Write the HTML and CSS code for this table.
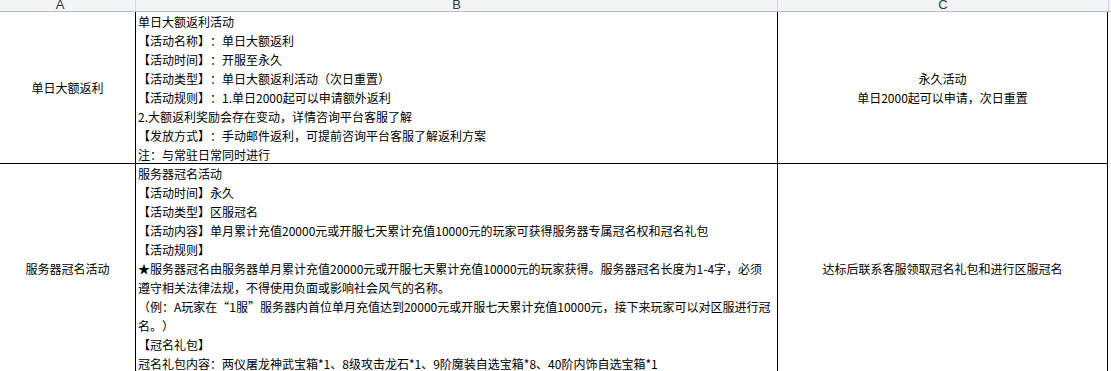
FILE: index.html
```html
<!DOCTYPE html>
<html lang="zh-CN">
<head>
<meta charset="utf-8">
<title>活动表</title>
<link rel="stylesheet" href="styles.css">
</head>
<body>
<div class="sheet">
  <div class="hdr hdr-a">A</div>
  <div class="hdr hdr-b">B</div>
  <div class="hdr hdr-c">C</div>
  <div class="hdr hdr-rest"></div>

  <div class="cell col-a center">单日大额返利</div>
  <div class="cell col-b text">单日大额返利活动<br>【活动名称】：单日大额返利<br>【活动时间】：开服至永久<br>【活动类型】：单日大额返利活动（次日重置）<br>【活动规则】：1.单日2000起可以申请额外返利<br>2.大额返利奖励会存在变动，详情咨询平台客服了解<br>【发放方式】：手动邮件返利，可提前咨询平台客服了解返利方案<br>注：与常驻日常同时进行</div>
  <div class="cell col-c center">永久活动<br>单日2000起可以申请，次日重置</div>
  <div class="cell col-rest"></div>

  <div class="cell col-a center">服务器冠名活动</div>
  <div class="cell col-b text">服务器冠名活动<br>【活动时间】永久<br>【活动类型】区服冠名<br>【活动内容】单月累计充值20000元或开服七天累计充值10000元的玩家可获得服务器专属冠名权和冠名礼包<br>【活动规则】<br>★服务器冠名由服务器单月累计充值20000元或开服七天累计充值10000元的玩家获得。服务器冠名长度为1-4字，必须<br>遵守相关法律法规，不得使用负面或影响社会风气的名称。<br>（例：A玩家在“1服”服务器内首位单月充值达到20000元或开服七天累计充值10000元，接下来玩家可以对区服进行冠<br>名。）<br>【冠名礼包】<br>冠名礼包内容：两仪屠龙神武宝箱*1、8级攻击龙石*1、9阶魔装自选宝箱*8、40阶内饰自选宝箱*1</div>
  <div class="cell col-c center">达标后联系客服领取冠名礼包和进行区服冠名</div>
  <div class="cell col-rest"></div>
</div>
</body>
</html>
```
FILE: styles.css
```css
html, body {
  margin: 0;
  padding: 0;
  background: #ffffff;
  overflow: hidden;
}

body {
  font-family: "Noto Sans CJK SC", "Microsoft YaHei", sans-serif;
  font-size: 12px;
  color: #000000;
  text-spacing-trim: space-all;
}

.sheet {
  display: grid;
  grid-template-columns: 135px 642px 331px 1fr;
  grid-template-rows: 12px 152px 210px;
}

.hdr {
  background: #f3f4f7;
  border-bottom: 1px solid #b9bdcc;
  box-sizing: border-box;
  color: #333333;
  font-family: "Liberation Sans", Arial, sans-serif;
  font-size: 13px;
  line-height: 13px;
  text-align: center;
  overflow: hidden;
  display: flex;
  align-items: flex-end;
  justify-content: center;
}

.hdr-a {
  padding-right: 15px;
}

.hdr-b, .hdr-c, .hdr-rest {
  border-left: 1px solid #d4d7e0;
}

.cell {
  box-sizing: border-box;
  border-bottom: 1px solid #000000;
  line-height: 19px;
  white-space: nowrap;
  overflow: hidden;
}

.col-b, .col-c {
  border-left: 1px solid #000000;
}

.col-c {
  border-right: 1px solid #000000;
}

.col-rest {
  border-bottom: none;
}

.center {
  display: flex;
  align-items: center;
  justify-content: center;
  text-align: center;
}

.text {
  padding-left: 2px;
}
```
